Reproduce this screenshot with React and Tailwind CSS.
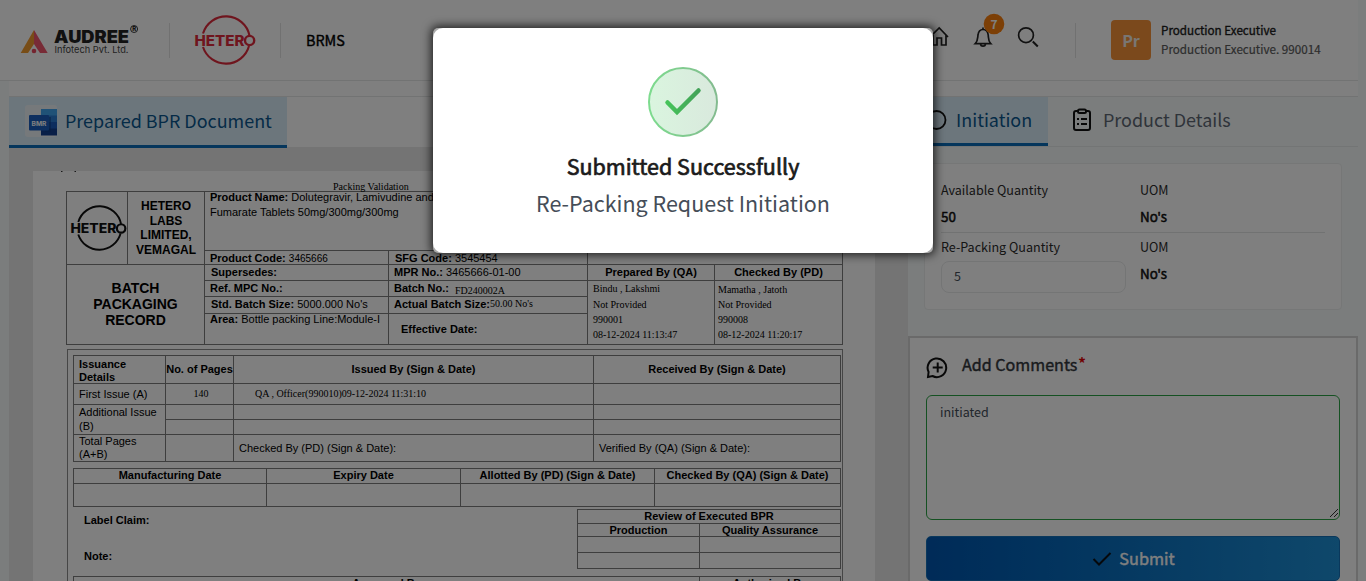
import React from 'react';

function Cell({ className = '', children }) {
  return <div className={`min-h-0 min-w-0 overflow-hidden whitespace-nowrap border-b border-r border-[#7c7c7c] ${className}`}>{children}</div>;
}

function Audree() {
  return (
    <svg width="120" height="34" viewBox="20 22 120 34" className="shrink-0">
      <path d="M34 29 L20.700 52 H28 L34 43 Z" fill="#f19a2e" />
      <path d="M34 29 L47.700 52 H40 L34 43 Z" fill="#f0566c" />
      <circle cx="34" cy="50" r="2.3" fill="#e8485f" />
      <text x="54" y="41.6" fontFamily="Inter, sans-serif" fontWeight="900" fontSize="17" textLength="75" lengthAdjust="spacingAndGlyphs" fill="#222">AUDREE</text>
      <text x="54.5" y="52.3" fontFamily="Inter, sans-serif" fontSize="9.3" textLength="74" lengthAdjust="spacingAndGlyphs" fill="#444">Infotech Pvt. Ltd.</text>
      <circle cx="134.1" cy="28" r="3.5" fill="none" stroke="#222" strokeWidth="0.9" />
      <text x="132.2" y="30.2" fontFamily="Inter, sans-serif" fontWeight="800" fontSize="6" fill="#222">R</text>
    </svg>
  );
}

function Hetero({ color, width, height }) {
  return (
    <svg width={width} height={height} viewBox="194 14 62 52" className="shrink-0" fill="none" stroke={color}>
      <path d="M203 33.5 A24 24 0 0 1 249.500 35.500 M203 47 A24 24 0 0 0 249 46" strokeWidth="2.1" />
      <circle cx="249.6" cy="40.5" r="4.6" strokeWidth="2.4" />
      <text x="194.5" y="45.5" stroke="none" fill={color} fontFamily="Inter, sans-serif" fontWeight="800" fontSize="14" textLength="50" lengthAdjust="spacingAndGlyphs">HETER</text>
    </svg>
  );
}

function Header() {
  return (
    <header className="flex h-[81px] w-[1358px] items-center border-b border-[#e4e6e6] bg-white pl-5">
      <Audree />
      <div className="ml-[29px] h-[35px] w-px bg-[#e3e3e3]" />
      <div className="ml-6"><Hetero color="#df2b3c" width={62} height={52} /></div>
      <div className="ml-6 h-[35px] w-px bg-[#e3e3e3]" />
      <div className="ml-[25px] text-[14.4px] text-black [-webkit-text-stroke:0.4px]">BRMS</div>
      <div className="flex-1" />
      <svg width="110" height="40" viewBox="928 10 110 40" fill="none" stroke="#222" strokeWidth="1.7" className="-mt-5 overflow-visible">
        <path d="M930 37 L939.2 28 L948 37 M933 35 V45 H937 V38 H941.5 V45 H946 V35" />
        <path d="M975.3 43.6 C978 41 977.5 38 978 35 C978.5 31 980 29.5 983 29.5 S987.800 31 988.200 35 C988.600 38 988 41 990.700 43.600 Z M983 29.500 V27.500 M980.500 44.500 C981 46.700 985 46.700 985.500 44.500" />
        <circle cx="994" cy="24" r="10.300" fill="#f97e0c" stroke="none" />
        <text x="994" y="29" textAnchor="middle" fill="#fff" stroke="none" fontSize="12" fontWeight="700">7</text>
        <circle cx="1026" cy="35.200" r="7.400" />
        <path d="M1032.800 41.500 L1037.800 46.500" strokeWidth="2" />
      </svg>
      <div className="ml-[37px] h-[35px] w-px bg-[#e3e3e3]" />
      <div className="ml-[35px] flex h-10 w-10 items-center justify-center rounded bg-[#f69239] text-[16px] font-bold text-[#f3ede7]">Pr</div>
      <div className="-mt-px ml-2.5 w-[197px] leading-5">
        <div className="h-[19px] text-[11.66px] text-[#1b1b1b] [-webkit-text-stroke:0.35px]">Production Executive</div>
        <div className="text-[11.66px] text-[#5a5a5a] [-webkit-text-stroke:0.2px]">Production Executive. 990014</div>
      </div>
    </header>
  );
}

function BmrIcon() {
  return (
    <svg width="32" height="32" viewBox="0 0 32 32" className="shrink-0">
      <rect width="32" height="32" rx="3" fill="#edf3f7" />
      <rect x="16" y="4" width="16" height="7" fill="#41a5ee" />
      <rect x="16" y="10.500" width="16" height="7" fill="#2b7cd3" />
      <rect x="16" y="17" width="16" height="7" fill="#185abd" />
      <rect x="16" y="23.500" width="16" height="7" fill="#103f91" />
      <rect x="20" y="12" width="6" height="15" fill="#0c3b80" opacity="0.500" />
      <rect x="4" y="10" width="20" height="15.500" rx="1" fill="#1c5fbf" />
      <text x="14" y="20.500" textAnchor="middle" fill="#fff" fontFamily="Inter, sans-serif" fontWeight="700" fontSize="6.600">BMR</text>
    </svg>
  );
}

function RecordHeader() {
  return (
    <div className="ml-[33px] grid h-[154px] w-[777px] shrink-0 grid-cols-[61px_77px_184px_199px_127px_128px] grid-rows-[59px_14px_16px_16px_17px_31px] border-l border-t border-[#7c7c7c] text-[11px] leading-[15px]">
      <Cell className="row-span-2 flex items-center justify-center pl-[3px]"><Hetero color="#111" width={57} height={48} /></Cell>
      <Cell className="row-span-2 flex flex-col items-center justify-center text-[12px] font-bold leading-[14.5px]">
        <div>HETERO</div><div>LABS</div><div>LIMITED,</div><div>VEMAGAL</div>
      </Cell>
      <Cell className="col-span-4 pl-[5px]">
        <div className="-mt-[2px]"><b>Product Name:</b> Dolutegravir, Lamivudine and Tenofovir Disoproxil</div>
        <div>Fumarate Tablets 50mg/300mg/300mg</div>
      </Cell>
      <Cell className="pl-[5px]"><b>Product Code:</b> <span className="text-[10px]">3465666</span></Cell>
      <Cell className="pl-[6px]"><b>SFG Code:</b> 3545454</Cell>
      <Cell className="col-span-2" />
      <Cell className="col-span-2 row-span-4 flex flex-col items-center justify-center pb-[2px] text-[14px] font-bold leading-4">
        <div>BATCH</div><div>PACKAGING</div><div>RECORD</div>
      </Cell>
      <Cell className="pl-[6px] font-bold">Supersedes:</Cell>
      <Cell className="pl-[5px]"><b>MPR No.:</b> 3465666-01-00</Cell>
      <Cell className="text-center font-bold">Prepared By (QA)</Cell>
      <Cell className="text-center font-bold">Checked By (PD)</Cell>
      <Cell className="pl-[5px] font-bold">Ref. MPC No.:</Cell>
      <Cell className="flex pl-[5px]"><b>Batch No.:</b><span className="ml-[6px] mt-[2px] font-['Liberation_Serif',serif] text-[10px]">FD240002A</span></Cell>
      <Cell className="row-span-3 pl-[5px] font-['Liberation_Serif',serif] text-[10px]">
        <div>Bindu , Lakshmi</div><div className="mt-px">Not Provided</div><div>990001</div><div>08-12-2024 11:13:47</div>
      </Cell>
      <Cell className="row-span-3 pl-[3px] pt-px font-['Liberation_Serif',serif] text-[10px]">
        <div>Mamatha , Jatoth</div><div>Not Provided</div><div>990008</div><div>08-12-2024 11:20:17</div>
      </Cell>
      <Cell className="pl-[6px]"><b>Std. Batch Size:</b> 5000.000 No's</Cell>
      <Cell className="flex pl-[5px]"><b>Actual Batch Size:</b><span className="-mt-px font-['Liberation_Serif',serif] text-[10px]">50.00 No's</span></Cell>
      <Cell className="pl-[5px]"><div className="-mt-[2px]"><b>Area:</b> Bottle packing Line:Module-I</div></Cell>
      <Cell className="pl-3 pt-[8px] font-bold">Effective Date:</Cell>
    </div>
  );
}

function IssuanceTable() {
  return (
    <div className="grid h-[107px] w-[768px] grid-cols-[92px_68px_360px_247px] grid-rows-[28px_21px_15px_15px_27px] border-l border-t border-[#7c7c7c] text-[11px] leading-[13px]">
      <Cell className="pl-[5px] pt-[2px] font-bold">Issuance<br />Details</Cell>
      <Cell className="flex items-center justify-center font-bold">No. of Pages</Cell>
      <Cell className="flex items-center justify-center font-bold">Issued By (Sign &amp; Date)</Cell>
      <Cell className="flex items-center justify-center font-bold">Received By (Sign &amp; Date)</Cell>
      <Cell className="pl-[5px] pt-[4px]">First Issue (A)</Cell>
      <Cell className="pl-[3px] pt-[3px] text-center font-['Liberation_Serif',serif] text-[10px]">140</Cell>
      <Cell className="pl-[21px] pt-[3px] font-['Liberation_Serif',serif] text-[10px]">QA , Officer(990010)09-12-2024 11:31:10</Cell>
      <Cell />
      <Cell className="row-span-2 pl-[5px] leading-[14px]">Additional Issue<br />(B)</Cell>
      <Cell /><Cell /><Cell /><Cell /><Cell /><Cell />
      <Cell className="pl-[5px]">Total Pages<br />(A+B)</Cell>
      <Cell />
      <Cell className="flex items-center pl-[5px]">Checked By (PD) (Sign &amp; Date):</Cell>
      <Cell className="flex items-center pl-[5px]">Verified By (QA) (Sign &amp; Date):</Cell>
    </div>
  );
}

function DatesTable() {
  return (
    <div className="mt-[6px] grid h-[39px] w-[768px] grid-cols-[193px_194px_194px_186px] grid-rows-[15px_23px] border-l border-t border-[#7c7c7c] text-center text-[11px] font-bold leading-[13px]">
      <Cell>Manufacturing Date</Cell><Cell>Expiry Date</Cell><Cell>Allotted By (PD) (Sign &amp; Date)</Cell><Cell>Checked By (QA) (Sign &amp; Date)</Cell>
      <Cell /><Cell /><Cell /><Cell />
    </div>
  );
}

function DocumentPanel() {
  return (
    <section className="flex h-[485px] w-[899px] flex-col bg-[#e9e9e9]">
      <div className="flex h-[51px] shrink-0">
        <div className="flex w-[278px] items-center border-b-[3px] border-[#0a6cb8] bg-[#d9ecf8] pl-4">
          <BmrIcon />
          <span className="ml-2 -mt-[2px] whitespace-nowrap text-[17.95px] text-[#0a578f]">Prepared BPR Document</span>
        </div>
        <div className="h-[50px] flex-1 bg-white" />
      </div>
      <div className="ml-6 mt-[23px] flex min-h-0 w-[842px] flex-1 flex-col overflow-hidden bg-white font-['Liberation_Sans',Arial,sans-serif] text-black">
        <div className="flex h-[20px] shrink-0 items-end justify-between">
          <svg width="60" height="20" viewBox="0 0 60 20" stroke="#333" strokeWidth="1"><path d="M28 0.500 H29.500 M41.500 0.500 H43" /></svg>
          <div className="w-[542px] translate-y-px font-['Liberation_Serif',serif] text-[10px] leading-[10px]">Packing Validation</div>
        </div>
        <RecordHeader />
        <div className="ml-[34px] mt-[4px] h-[300px] w-[776px] shrink-0 border border-[#8c8c8c] pl-[5px] pt-[5px]">
          <IssuanceTable />
          <DatesTable />
          <div className="mt-[2px] flex h-[60px] w-[768px] text-[11px] font-bold">
            <div className="w-[504px] pl-[11px] leading-[14px]">
              <div className="mt-[4px]">Label Claim:</div>
              <div className="mt-[22px]">Note:</div>
            </div>
            <div className="grid w-[264px] grid-cols-[122px_141px] grid-rows-[14px_13px_16px_16px] border-l border-t border-[#7c7c7c] text-center leading-[13px]">
              <Cell className="col-span-2">Review of Executed BPR</Cell>
              <Cell>Production</Cell><Cell>Quality Assurance</Cell>
              <Cell /><Cell /><Cell /><Cell />
            </div>
          </div>
          <div className="mt-[7px] grid w-[768px] grid-cols-[626px_141px] border-l border-t border-[#7c7c7c] text-center text-[11px] font-bold leading-[13px]">
            <Cell>Approved By</Cell><Cell>Authorized By</Cell>
          </div>
        </div>
      </div>
    </section>
  );
}

function QuantityCard() {
  return (
    <div className="ml-4 mt-4 h-[147px] w-[418px] rounded border border-[#eceeee] bg-white px-4 pt-4 text-[12.55px] text-[#2a2a2a]">
      <div className="grid h-[53px] grid-cols-[199px_1fr] grid-rows-[20px_20px] gap-y-[6px] border-b border-[#e3e5e5] leading-5">
        <div>Available Quantity</div><div>UOM</div>
        <div className="text-[13.4px] text-[#111] [-webkit-text-stroke:0.5px]">50</div>
        <div className="text-[13.4px] text-[#111] [-webkit-text-stroke:0.5px]">No's</div>
      </div>
      <div className="grid grid-cols-[199px_1fr] pt-[4px] leading-5">
        <div>
          <div>Re-Packing Quantity</div>
          <div className="mt-[4px] flex h-8 w-[185px] items-center rounded-lg border border-[#e8eaeb] pb-[2px] pl-3 text-[#444d57]">5</div>
        </div>
        <div>
          <div>UOM</div>
          <div className="mt-[6px] text-[13.4px] text-[#111] [-webkit-text-stroke:0.5px]">No's</div>
        </div>
      </div>
    </div>
  );
}

function SidePanel() {
  return (
    <section className="w-[450px]">
      <div className="flex h-[50px] border-b border-[#e6eaea] text-[17.95px]">
        <div className="flex w-[140px] items-center border-b-[3px] border-[#0a6cb8] bg-[#d9ecf8] text-[#0a578f]">
          <svg width="20" height="24" viewBox="0 0 20 24" fill="none" stroke="#111" strokeWidth="1.800" className="ml-[19px] shrink-0"><circle cx="9.500" cy="12" r="9" /></svg>
          <span className="-mt-[2px] ml-[9px]">Initiation</span>
        </div>
        <svg width="20" height="24" viewBox="0 0 20 24" fill="none" stroke="#111" strokeWidth="2" className="ml-6 mt-[11px] shrink-0">
          <path d="M6 3 H4 Q2 3 2 5 V20 Q2 22 4 22 H16 Q18 22 18 20 V5 Q18 3 16 3 H14" />
          <rect x="6" y="1.500" width="8" height="3.500" rx="1.500" />
          <path d="M5 11 H7 M9 11 H15 M5 16 H7 M9 16 H15" />
        </svg>
        <span className="ml-[11px] leading-[45px] text-[#5f6875]">Product Details</span>
      </div>
      <QuantityCard />
      <div className="mt-[26px] h-[260px] border-2 border-[#d4d4d4] bg-white px-4">
        <div className="flex h-[57px] items-center">
          <svg width="23" height="23" viewBox="0 0 23 23" fill="none" stroke="#111" strokeWidth="2" className="mt-px">
            <path d="M2 21 L2.600 16 A9.300 9.300 0 1 1 6.500 20 Z" />
            <path d="M11.700 6.500 V16.500 M6.700 11.500 H16.700" />
          </svg>
          <span className="-mt-1 ml-[13px] text-[16.1px] text-[#33373c] [-webkit-text-stroke:0.4px]">Add Comments</span>
          <span className="-mt-1.5 ml-px text-[15px] font-bold text-[#e00000]">*</span>
        </div>
        <div className="flex h-[125px] w-[414px] items-end justify-between rounded-md border border-[#2ba344] pb-px pl-[13px]">
          <span className="self-start pt-[6px] text-[12.5px] leading-5 text-[#444d57]">initiated</span>
          <svg width="10" height="10" viewBox="0 0 10 10" stroke="#333" strokeWidth="1"><path d="M1 9 L9 1 M5 9 L9 5" /></svg>
        </div>
        <div className="mt-4 flex h-[45px] w-[414px] items-center justify-center rounded-[5px] border border-[#1470b8] bg-linear-to-r from-[#0056b0] to-[#1e90d6] text-[16.3px] text-white">
          <svg width="20" height="16" viewBox="0 0 20 16" fill="none" stroke="#0c1116" strokeWidth="2" className="ml-px"><path d="M1.500 8 L7 13.500 L18.500 2" /></svg>
          <span className="ml-[7px] [-webkit-text-stroke:0.4px]">Submit</span>
        </div>
      </div>
    </section>
  );
}

function SuccessDialog() {
  return (
    <div className="absolute left-[433px] top-7 h-[225px] w-[500px] rounded-[5px] bg-[#a8a8a8] shadow-[0_0_10px_2px_rgba(0,0,0,0.75)]">
      <div className="flex h-full flex-col items-center rounded-[10px] bg-white pt-[39px]">
        <svg width="70" height="70" viewBox="0 0 70 70" fill="none">
          <defs>
            <linearGradient id="ring" x1="0" x2="1"><stop stopColor="#7ddb8e" /><stop offset="1" stopColor="#83bb8f" /></linearGradient>
            <linearGradient id="disc" x1="0" x2="1"><stop stopColor="#daf5df" /><stop offset="1" stopColor="#d9e9dd" /></linearGradient>
            <linearGradient id="tick" x1="0" x2="1"><stop stopColor="#46c35a" /><stop offset="1" stopColor="#43a258" /></linearGradient>
          </defs>
          <circle cx="35" cy="35" r="34" fill="url(#disc)" stroke="url(#ring)" strokeWidth="2" />
          <path d="M19.500 35.500 L29 45 L50.500 23.500" stroke="url(#tick)" strokeWidth="4.500" strokeLinecap="round" />
        </svg>
        <div className="mt-[11px] text-[21.5px] leading-9 text-[#1b1b1b] [-webkit-text-stroke:0.7px]">Submitted Successfully</div>
        <div className="mt-px text-[21.5px] leading-9 text-[#454d58]">Re-Packing Request Initiation</div>
      </div>
    </div>
  );
}

export default function App() {
  return (
    <div className="relative h-[581px] w-[1366px] overflow-hidden bg-[#f6fbfa] font-['Noto_Sans_CJK_SC',sans-serif]">
      <Header />
      <main className="ml-[9px] w-[1349px]">
        <div className="h-4 border-b border-[#e4e6e6] bg-white" />
        <div className="flex">
          <DocumentPanel />
          <SidePanel />
        </div>
      </main>
      <div className="absolute inset-0 bg-black/50" />
      <SuccessDialog />
    </div>
  );
}
